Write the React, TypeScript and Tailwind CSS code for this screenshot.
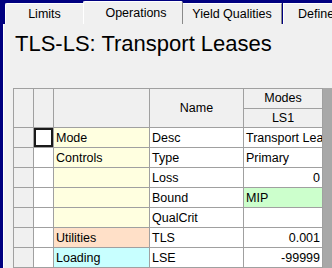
const CATS: { label: string; bg: string }[] = [
  { label: "Mode", bg: "bg-[#ffffe0]" },
  { label: "Controls", bg: "bg-[#ffffe0]" },
  { label: "", bg: "bg-[#ffffe0]" },
  { label: "", bg: "bg-[#ffffe0]" },
  { label: "", bg: "bg-[#ffffe0]" },
  { label: "Utilities", bg: "bg-[#ffe0c8]" },
  { label: "Loading", bg: "bg-[#c8ffff]" },
];

const ROWS = [
  { name: "Desc", value: "Transport Leases", align: "left", bg: "bg-white" },
  { name: "Type", value: "Primary", align: "left", bg: "bg-white" },
  { name: "Loss", value: "0", align: "right", bg: "bg-white" },
  { name: "Bound", value: "MIP", align: "left", bg: "bg-[#ccffcc]" },
  { name: "QualCrit", value: "", align: "left", bg: "bg-white" },
  { name: "TLS", value: "0.001", align: "right", bg: "bg-white" },
  { name: "LSE", value: "-99999", align: "right", bg: "bg-white" },
];

const App = () => {
  return (
    <div
      className="w-[332px] h-[268px] bg-[#000080] flex flex-col pl-[3px] overflow-hidden text-black"
      style={{ fontFamily: '"Liberation Sans", Arial, sans-serif' }}
    >
      {/* tab strip */}
      <div className="h-[24px] flex items-end text-[12.5px] shrink-0">
        <div className="ml-[2px] w-[78px] h-[21px] bg-[#f0f0f0] border-t border-l border-white rounded-tl-[2px] flex items-center justify-center">
          Limits
        </div>
        <div className="w-[100px] h-[23px] bg-[#f0f0f0] border-t border-l border-white border-r border-r-[#8a8a8a] rounded-t-[2px] flex items-center justify-center pl-[6px]">
          Operations
        </div>
        <div className="w-[99px] h-[21px] bg-[#f0f0f0] border-t border-white border-r border-r-[#8a8a8a] flex items-center justify-center">
          Yield Qualities
        </div>
        <div className="ml-px flex-1 h-[21px] bg-[#f0f0f0] border-t border-l border-white flex items-center pl-[14px] whitespace-nowrap overflow-hidden">
          Define
        </div>
      </div>

      {/* page */}
      <div className="flex-1 bg-[#f0f0f0] border-l border-white flex flex-col">
        <div className="h-[64px] pl-[11px] pt-[9px] text-[22px] leading-[22px] whitespace-nowrap">
          TLS-LS: Transport Leases
        </div>

        <div className="flex ml-[9px] bg-[#a8a8a8] flex-1">
          <div className="grid grid-cols-[19px_19px_95px_93px_78px] grid-rows-[19px_18px_repeat(7,19px)] gap-px bg-[#a0a0a0] border border-[#a0a0a0] text-[12.5px] leading-[19px]">
            <div className="row-span-2 bg-[#f0f0f0]" />
            <div className="row-span-2 bg-[#f0f0f0]" />
            <div className="row-span-2 bg-[#f0f0f0]" />
            <div className="row-span-2 bg-[#f0f0f0] flex items-center justify-center">
              Name
            </div>
            <div className="bg-[#f0f0f0] text-center">Modes</div>
            <div className="bg-[#f0f0f0] text-center leading-[18px]">LS1</div>

            {ROWS.map((row, i) => (
              <div key={row.name} className="contents">
                <div className="bg-[#f0f0f0]" />
                <div
                  className={
                    i === 0
                      ? "bg-white shadow-[inset_0_0_0_2px_#1a1a1a]"
                      : "bg-white"
                  }
                />
                <div className={`${CATS[i].bg} pl-[2px] pt-px whitespace-nowrap`}>
                  {CATS[i].label}
                </div>
                <div className="bg-white pl-[2px] pt-px whitespace-nowrap">
                  {row.name}
                </div>
                <div
                  className={`${row.bg} pt-px px-[2px] whitespace-nowrap overflow-hidden ${
                    row.align === "right" ? "text-right" : "text-left"
                  }`}
                >
                  {row.value}
                </div>
              </div>
            ))}
          </div>
        </div>
      </div>
    </div>
  );
};

export default App;
